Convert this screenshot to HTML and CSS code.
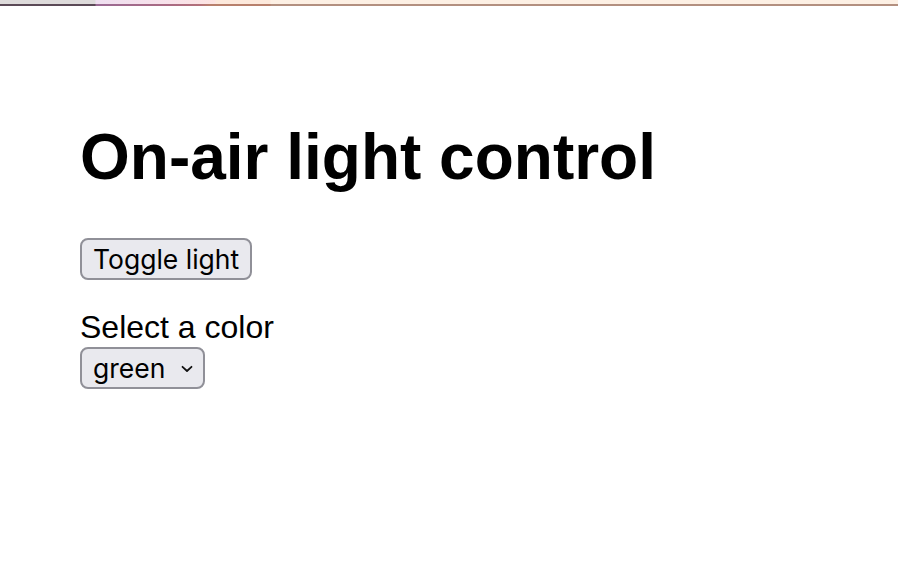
FILE: index.html
```html
<!DOCTYPE html>
<html lang="en">
<head>
<meta charset="utf-8">
<title>On-air light control</title>
<link rel="stylesheet" href="styles.css">
</head>
<body>
<div class="topbar">
  <div class="topbar-light"></div>
  <div class="topbar-dark"></div>
</div>
<main class="page">
  <h1 class="title">On-air light control</h1>
  <button class="btn" type="button">Toggle light</button>
  <label class="field-label" for="color">Select a color</label>
  <div class="select-wrap">
    <select id="color" class="select">
      <option>green</option>
      <option>red</option>
      <option>blue</option>
    </select>
    <svg class="chevron" width="12" height="8" viewBox="0 0 12 8" aria-hidden="true"><path d="M1.5 1.8 L6 6 L10.5 1.8" fill="none" stroke="#111" stroke-width="1.8" stroke-linecap="round" stroke-linejoin="round"/></svg>
  </div>
</main>
</body>
</html>
```

FILE: styles.css
```css
html, body {
  margin: 0;
  padding: 0;
  background: #ffffff;
}

body {
  font-family: "Liberation Sans", Arial, Helvetica, sans-serif;
  font-size: 32px;
  color: #000;
}

.topbar {
  height: 6px;
  display: flex;
  flex-direction: column;
}

.topbar-light {
  height: 4px;
  background: linear-gradient(to right,
    #dedbdb 0px, #dedbdb 95px,
    #efdff0 96px, #f8e2ea 170px, #fde4e2 215px,
    #fde9dc 216px, #fde9dc 270px,
    #fdf0e4 271px, #fdf0e4 100%);
}

.topbar-dark {
  height: 2px;
  background: linear-gradient(to right,
    #5b4a57 0px, #5b4a57 95px,
    #9a6a94 96px, #aa6a82 170px, #b3707a 200px,
    #b8806c 210px, #b8806c 270px,
    #b39080 271px, #b39080 100%);
}

.page {
  padding: 71px 80px 0 80px;
  display: flex;
  flex-direction: column;
  align-items: flex-start;
}

.title {
  font-size: 64px;
  font-weight: bold;
  line-height: 74px;
  margin: 43px 0 44px 0;
}

.btn {
  font-family: Inter, "Noto Sans", sans-serif;
  font-size: 26.5px;
  height: 42px;
  padding: 0 11px;
  margin: 0;
  border: 2px solid #909098;
  border-radius: 8px;
  background: #e9e9ee;
  color: #000;
  line-height: 1;
}

.field-label {
  margin-top: 29px;
  line-height: 37px;
}

.select-wrap {
  position: relative;
  margin-top: 1px;
}

.select {
  appearance: none;
  -webkit-appearance: none;
  font-family: Inter, "Noto Sans", sans-serif;
  font-size: 26.5px;
  height: 42px;
  width: 125px;
  padding: 0 0 0 11px;
  margin: 0;
  border: 2px solid #909098;
  border-radius: 8px;
  background: #e9e9ee;
  color: #000;
  display: block;
}

.chevron {
  position: absolute;
  left: 101px;
  top: 18px;
  pointer-events: none;
}
```
